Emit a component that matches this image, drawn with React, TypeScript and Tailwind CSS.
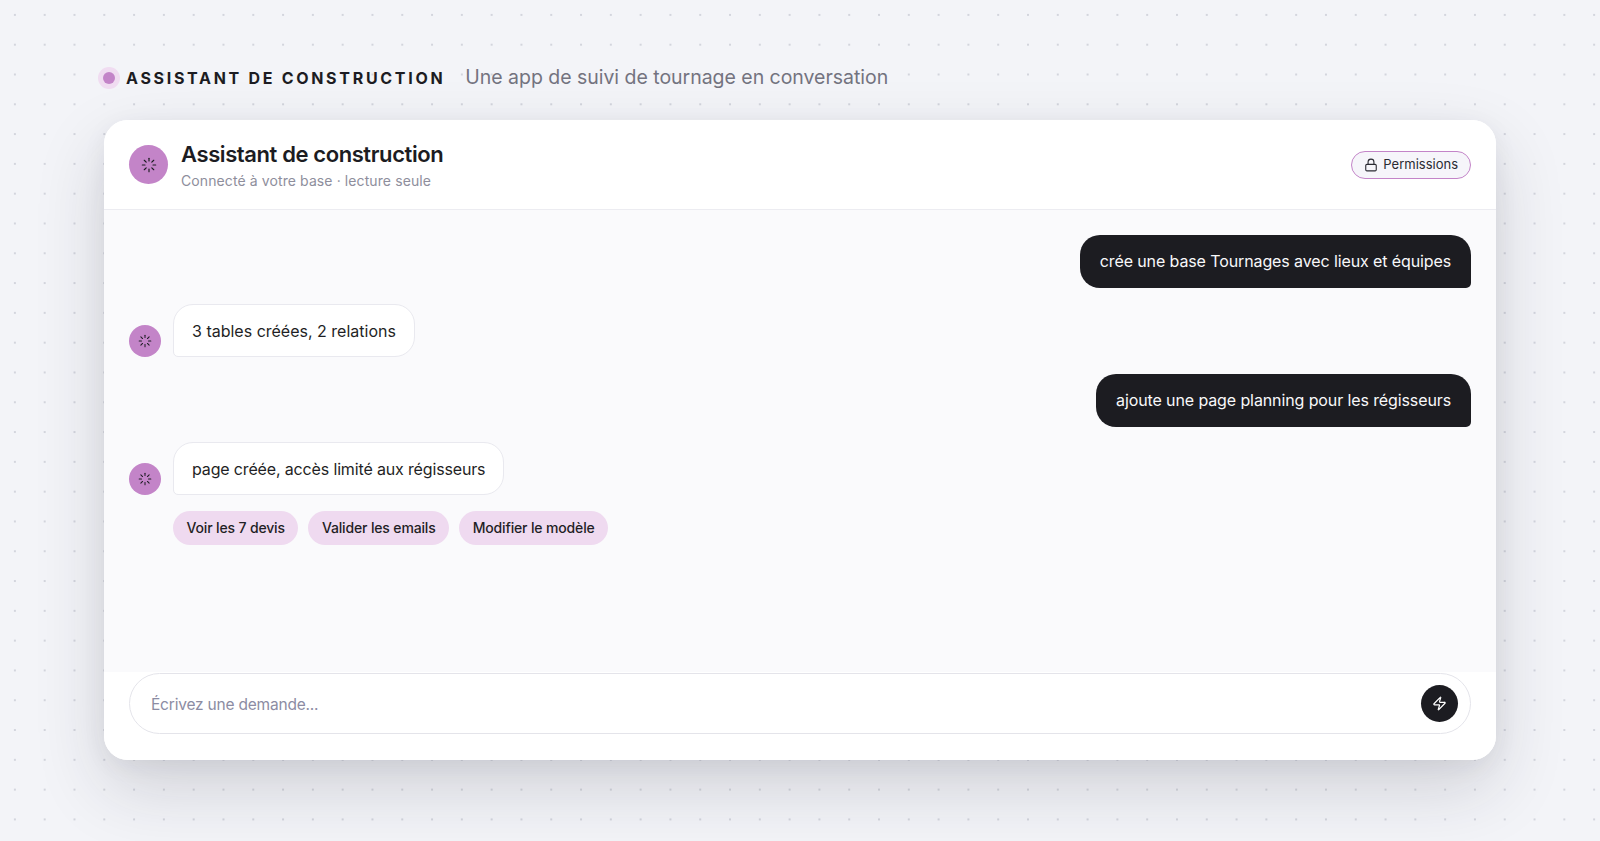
import React from "react";
import { Loader, Lock, Zap } from "lucide-react";

const font = "font-['Inter','Liberation_Sans',sans-serif]";

const Avatar: React.FC = () => (
  <div className="w-8 h-8 shrink-0 rounded-full bg-[#c384c8] flex items-center justify-center text-[#1c1c22]">
    <Loader size={14} strokeWidth={1.75} />
  </div>
);

const UserBubble: React.FC<{ text: string }> = ({ text }) => (
  <div className="self-end h-[52.5px] flex items-center px-5 bg-[#1c1c21] text-[#f8f8fa] text-[16px] tracking-[-0.11px] rounded-[20px] rounded-br-[5px]">
    {text}
  </div>
);

const BotBubble: React.FC<{ text: string; className: string }> = ({ text, className }) => (
  <div className="flex items-end gap-3 -mt-[0.5px]">
    <Avatar />
    <div
      className={`h-[53px] flex items-center px-[18px] bg-white border border-[#e9e9ef] text-[#1f1f25] text-[16px] rounded-[20px] rounded-bl-[5px] ${className}`}
    >
      {text}
    </div>
  </div>
);

const chips = ["Voir les 7 devis", "Valider les emails", "Modifier le modèle"];

export default function App() {
  return (
    <div
      className={`${font} h-[841px] overflow-hidden px-[104px] pt-[67px] bg-[#f3f4f8] bg-[radial-gradient(circle,#d3d5dd_1px,transparent_1.3px)] bg-size-[29.8px_29.8px] bg-position-[0px_0px]`}
    >
      <div className="flex items-center h-[22px] mb-[31px]">
        <span className="w-3 h-3 -ml-px rounded-full bg-[#c384c8] shadow-[0_0_0_5px_#f0dcf1]" />
        <span className="ml-[11px] text-[#1c1c22] text-[16px] font-bold tracking-[2.7px]">
          ASSISTANT DE CONSTRUCTION
        </span>
        <span className="ml-[20px] text-[#73737f] text-[19.5px] tracking-[-0.03px]">
          Une app de suivi de tournage en conversation
        </span>
      </div>

      <div className="w-[1392px] h-[640px] flex flex-col rounded-[24px] bg-white overflow-hidden shadow-[0_28px_70px_rgba(30,30,50,0.16),0_6px_24px_rgba(30,30,50,0.06)]">
        <header className="h-[90px] shrink-0 flex items-center justify-between px-[25px] border-b border-[#ececf1] bg-white">
          <div className="flex items-center gap-[13px]">
            <div className="w-[39px] h-[39px] rounded-full bg-[#c384c8] flex items-center justify-center text-[#1c1c22]">
              <Loader size={16} strokeWidth={1.75} />
            </div>
            <div className="flex flex-col pt-[2px]">
              <h1 className="text-[22px] leading-[29px] font-semibold text-[#1c1c22] tracking-[-0.4px]">
                Assistant de construction
              </h1>
              <p className="mt-px text-[14px] leading-[22px] text-[#8e8e9c] tracking-[0.1px]">
                Connecté à votre base · lecture seule
              </p>
            </div>
          </div>
          <div className="h-[28px] flex items-center gap-[5px] pl-[12px] pr-[12px] rounded-full border border-[#c384c8] bg-[#f6f5fa] text-[13px] text-[#2a2a32]">
            <Lock size={14} strokeWidth={1.9} />
            Permissions
          </div>
        </header>

        <main className="flex-1 flex flex-col gap-[17px] pt-[25px] px-[25px] bg-[#fafafc]">
          <UserBubble text="crée une base Tournages avec lieux et équipes" />
          <BotBubble text="3 tables créées, 2 relations" className="tracking-[0px]" />
          <UserBubble text="ajoute une page planning pour les régisseurs" />
          <div className="flex flex-col gap-[16px] -mt-[1px]">
            <BotBubble text="page créée, accès limité aux régisseurs" className="tracking-[-0.15px]" />
            <div className="flex gap-[10px] pl-[44px]">
              {chips.map((c) => (
                <button
                  key={c}
                  className="h-[34px] px-[13.5px] pb-px rounded-full bg-[#efdaf0] text-[14px] tracking-[-0.15px] font-[450] text-[#1f1f25]"
                >
                  {c}
                </button>
              ))}
            </div>
          </div>
        </main>

        <footer className="h-[88px] shrink-0 px-[25px] pt-px bg-white">
          <div className="h-[61px] flex items-center pl-[21px] pr-[12px] rounded-full border border-[#e4e4ea] bg-white">
            <input
              placeholder="Écrivez une demande..."
              className="flex-1 pt-[2px] bg-transparent outline-none text-[15.5px] tracking-[-0.2px] placeholder:text-[#8c8ca3]"
            />
            <div className="w-[37px] h-[37px] rounded-full bg-[#1c1c21] flex items-center justify-center text-white">
              <Zap size={15} strokeWidth={2} />
            </div>
          </div>
        </footer>
      </div>
    </div>
  );
}
